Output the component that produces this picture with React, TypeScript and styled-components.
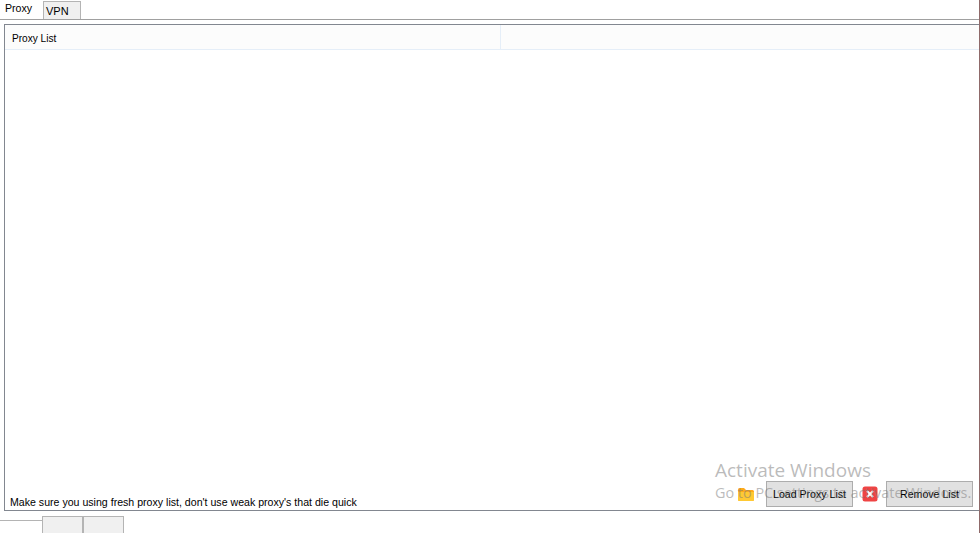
import React from 'react';
import styled, { createGlobalStyle } from 'styled-components';

const GlobalStyle = createGlobalStyle`
  html, body {
    margin: 0;
    padding: 0;
    background: #ffffff;
    overflow: hidden;
  }
  body {
    font-family: "Liberation Sans", Arial, sans-serif;
    font-size: 10.6px;
    color: #000000;
  }
`;

const Window = styled.div`
  position: relative;
  display: flex;
  flex-direction: column;
  width: 980px;
  height: 533px;
  box-sizing: border-box;
  border-right: 1px solid #8f6a6a;
  overflow: hidden;
`;

const TabStrip = styled.div`
  display: flex;
  align-items: flex-end;
  height: 19px;
  flex-shrink: 0;
`;

const ActiveTab = styled.div`
  box-sizing: border-box;
  display: flex;
  align-items: center;
  width: 43px;
  height: 19px;
  padding: 0 0 3px 5px;
`;

const Tab = styled.div`
  box-sizing: border-box;
  display: flex;
  align-items: center;
  width: 38px;
  height: 18px;
  padding-left: 2px;
  font-size: 11px;
  background: #f0f0f0;
  border: 1px solid #b4b4b4;
  border-bottom: none;
`;

const TabPage = styled.div`
  box-sizing: border-box;
  height: 497px;
  flex-shrink: 0;
  border-top: 1px solid #a0a0a0;
  padding: 4px 0 0 4px;
`;

const ListPanel = styled.div`
  box-sizing: border-box;
  display: flex;
  flex-direction: column;
  height: 487px;
  border: 1px solid #828790;
  border-right: none;
`;

const ListHeader = styled.div`
  display: grid;
  grid-template-columns: 495px 1fr;
  height: 25px;
  flex-shrink: 0;
  box-sizing: border-box;
  font-size: 10.1px;
  background: #fcfcfc;
  border-bottom: 1px solid #e5eef8;
`;

const HeaderCell = styled.div`
  display: flex;
  align-items: center;
  padding: 2px 0 0 7px;
  & + & {
    border-left: 1px solid #e5eef8;
  }
`;

const ListBody = styled.div`
  flex: 1;
  display: flex;
  align-items: flex-end;
  justify-content: space-between;
  padding: 0 6px 3px 5px;
`;

const Hint = styled.span`
  line-height: 13px;
  margin-bottom: -2px;
`;

const Actions = styled.div`
  display: flex;
  gap: 9px;
  align-items: center;
`;

const ActionGroup = styled.div<{ $gap: number }>`
  display: flex;
  align-items: center;
  gap: ${(p) => p.$gap}px;
`;

const ActionButton = styled.button`
  box-sizing: border-box;
  width: 87px;
  height: 26px;
  padding: 0;
  font: inherit;
  color: #000000;
  background: #e1e1e1;
  border: 1px solid #adadad;
`;

const BottomStrip = styled.div`
  display: flex;
  height: 17px;
  padding-left: 42px;
  position: relative;
`;

const EmptyTab = styled.div`
  box-sizing: border-box;
  width: 41px;
  height: 17px;
  background: #f0f0f0;
  border: 1px solid #b4b4b4;
  border-bottom: none;
`;

const BottomEdge = styled.div`
  position: absolute;
  left: 0;
  top: 4px;
  width: 42px;
  border-top: 1px solid #b4b4b4;
`;

const Watermark = styled.div`
  position: absolute;
  left: 715px;
  top: 458px;
  color: rgba(120, 120, 120, 0.5);
  font-family: "Open Sans", "Noto Sans", sans-serif;
  pointer-events: none;
  white-space: nowrap;
`;

const WatermarkTitle = styled.div`
  font-size: 19px;
  line-height: 25px;
`;

const WatermarkLine = styled.div`
  font-size: 14.4px;
  line-height: 20px;
`;

const FolderIcon = () => (
  <svg width="18" height="15" viewBox="0 0 18 15" aria-hidden="true">
    <path d="M1 2.5 Q1 1 2.5 1 H7 L9 3 H15.5 Q17 3 17 4.5 V12.5 Q17 14 15.5 14 H2.5 Q1 14 1 12.5 Z" fill="#ffa91a" />
    <path d="M1 5 H17 V12.5 Q17 14 15.5 14 H2.5 Q1 14 1 12.5 Z" fill="#ffc933" />
  </svg>
);

const CloseIcon = () => (
  <svg width="16" height="16" viewBox="0 0 16 16" aria-hidden="true">
    <rect x="0.5" y="0.5" width="15" height="15" rx="2.5" fill="#ef4444" />
    <path d="M5 5 L11 11 M11 5 L5 11" stroke="#ffffff" strokeWidth="2" />
  </svg>
);

export default function App() {
  return (
    <>
      <GlobalStyle />
      <Window>
        <TabStrip>
          <ActiveTab>Proxy</ActiveTab>
          <Tab>VPN</Tab>
        </TabStrip>
        <TabPage>
          <ListPanel>
            <ListHeader>
              <HeaderCell>Proxy List</HeaderCell>
              <HeaderCell />
            </ListHeader>
            <ListBody>
              <Hint>Make sure you using fresh proxy list, don't use weak proxy's that die quick</Hint>
              <Actions>
                <ActionGroup $gap={11}>
                  <FolderIcon />
                  <ActionButton>Load Proxy List</ActionButton>
                </ActionGroup>
                <ActionGroup $gap={8}>
                  <CloseIcon />
                  <ActionButton>Remove List</ActionButton>
                </ActionGroup>
              </Actions>
            </ListBody>
          </ListPanel>
        </TabPage>
        <BottomStrip>
          <BottomEdge />
          <EmptyTab />
          <EmptyTab />
        </BottomStrip>
        <Watermark>
          <WatermarkTitle>Activate Windows</WatermarkTitle>
          <WatermarkLine>Go to PC settings to activate Windows.</WatermarkLine>
        </Watermark>
      </Window>
    </>
  );
}
